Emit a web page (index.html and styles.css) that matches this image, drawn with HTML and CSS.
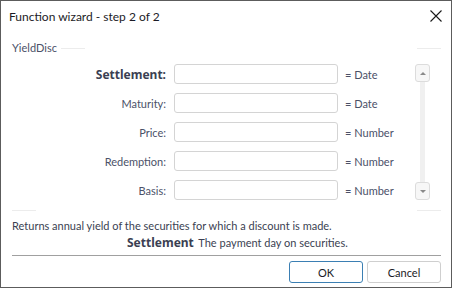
FILE: index.html
```html
<!DOCTYPE html>
<html lang="en">
<head>
    <meta charset="UTF-8">
    <meta name="viewport" content="width=device-width, initial-scale=1.0">
    <title>Function wizard</title>
    <link rel="stylesheet" href="styles.css">
</head>
<body>
    <div class="dialog">
        <div class="titlebar">
            <span class="title">Function wizard - step 2 of 2</span>
            <button class="close" aria-label="Close">
                <svg width="12" height="12" viewBox="0 0 12 12">
                    <path d="M0.5 0.5 L11.5 11.5 M11.5 0.5 L0.5 11.5" stroke="#1a1a1a" stroke-width="1.1" fill="none"/>
                </svg>
            </button>
        </div>

        <div class="group">
            <div class="group-head">
                <span class="group-name">YieldDisc</span>
                <span class="rule short"></span>
                <span class="spacer"></span>
                <span class="rule short"></span>
            </div>

            <div class="group-body">
                <div class="fields">
                    <div class="field">
                        <label class="field-label bold">Settlement:</label>
                        <input class="field-input" type="text">
                        <span class="field-type">= Date</span>
                    </div>
                    <div class="field">
                        <label class="field-label">Maturity:</label>
                        <input class="field-input" type="text">
                        <span class="field-type">= Date</span>
                    </div>
                    <div class="field">
                        <label class="field-label">Price:</label>
                        <input class="field-input" type="text">
                        <span class="field-type">= Number</span>
                    </div>
                    <div class="field">
                        <label class="field-label">Redemption:</label>
                        <input class="field-input" type="text">
                        <span class="field-type">= Number</span>
                    </div>
                    <div class="field">
                        <label class="field-label">Basis:</label>
                        <input class="field-input" type="text">
                        <span class="field-type">= Number</span>
                    </div>
                </div>

                <div class="scrollbar">
                    <div class="scroll-btn"><span class="arrow up"></span></div>
                    <div class="scroll-track"></div>
                    <div class="scroll-btn"><span class="arrow down"></span></div>
                </div>
            </div>

            <div class="group-foot">
                <span class="rule short"></span>
                <span class="spacer"></span>
                <span class="rule short"></span>
            </div>
        </div>

        <p class="desc">Returns annual yield of the securities for which a discount is made.</p>
        <p class="hint"><b>Settlement</b> The payment day on securities.</p>

        <div class="separator"></div>

        <div class="buttons">
            <button class="btn primary">OK</button>
            <button class="btn">Cancel</button>
        </div>
    </div>
</body>
</html>
```

FILE: styles.css
```css
* {
    box-sizing: border-box;
}

body {
    margin: 0;
    padding: 0;
    background: #ffffff;
    font-family: Lato, "Liberation Sans", Arial, sans-serif;
    font-size: 11px;
}

.dialog {
    width: 452px;
    height: 288px;
    border: 1px solid #5c5c5c;
    background: #ffffff;
    display: flex;
    flex-direction: column;
}

.titlebar {
    height: 30px;
    display: flex;
    align-items: center;
    justify-content: space-between;
    padding-left: 8px;
    padding-right: 9px;
}

.title {
    font-size: 12px;
    color: #1b1b26;
}

.close {
    border: none;
    background: none;
    padding: 0;
    width: 12px;
    height: 12px;
    display: flex;
}

.group {
    padding: 0 10px 0 11px;
}

.group-head {
    display: flex;
    align-items: center;
    height: 14px;
    margin-top: 10px;
}

.group-name {
    color: #4b5168;
    margin-right: 4px;
    line-height: 14px;
}

.rule {
    height: 1px;
    background: #ececec;
}

.rule.short {
    width: 24px;
}

.spacer {
    flex: 1;
}

.group-body {
    display: flex;
    margin-top: 9px;
}

.fields {
    flex: 1;
    display: flex;
    flex-direction: column;
    gap: 9px;
}

.field {
    display: flex;
    align-items: center;
    height: 20px;
}

.field-label {
    width: 154px;
    text-align: right;
    color: #4b5168;
    margin-right: 8px;
}

.field-label.bold,
.hint b {
    font-family: "Noto Sans", Arial, sans-serif;
    font-size: 12px;
    font-weight: bold;
    color: #3b3f52;
}

.field-input {
    width: 164px;
    height: 20px;
    border: 1px solid #d4d4d4;
    border-radius: 3px;
    margin: 0 7px 0 0;
    padding: 0 4px;
    font: inherit;
}

.field-type {
    color: #4b5168;
}

.scrollbar {
    width: 15px;
    margin-right: 11px;
    display: flex;
    flex-direction: column;
    align-items: center;
}

.scroll-btn {
    width: 15px;
    height: 18px;
    border: 1px solid #dcdcdc;
    border-radius: 3px;
    background: #f7f7f7;
    display: flex;
    align-items: center;
    justify-content: center;
}

.scroll-track {
    flex: 1;
    width: 5px;
    background: #f0f0f0;
}

.arrow {
    width: 0;
    height: 0;
    border-left: 3px solid transparent;
    border-right: 3px solid transparent;
}

.arrow.up {
    border-bottom: 3px solid #8a8a8a;
}

.arrow.down {
    border-top: 3px solid #8a8a8a;
}

.group-foot {
    display: flex;
    align-items: center;
    height: 1px;
    margin-top: 10px;
}

.desc {
    margin: 8px 0 0 11px;
    color: #3b3f52;
    line-height: 14px;
}

.hint {
    margin: 3px 0 0 126px;
    color: #3b3f52;
    line-height: 14px;
}

.hint b {
    margin-right: 2px;
}

.separator {
    height: 1px;
    background: #a0a0a0;
    margin: 5px 10px 0 11px;
}

.buttons {
    display: flex;
    justify-content: flex-end;
    gap: 4px;
    padding-right: 10px;
    margin-top: 5px;
}

.btn {
    width: 74px;
    height: 22px;
    border: 1px solid #cfcfcf;
    border-radius: 3px;
    background: #ffffff;
    font: inherit;
    color: #1b1b26;
    padding: 0;
}

.btn.primary {
    border-color: #3b7fb3;
}
```
